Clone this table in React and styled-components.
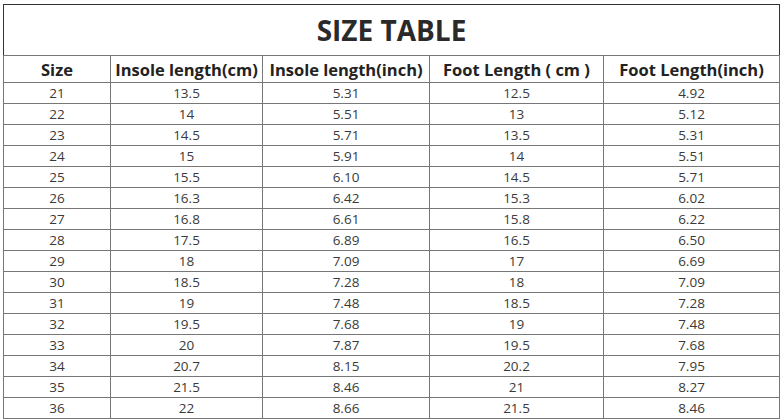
import React from "react";
import styled, { createGlobalStyle } from "styled-components";

const GlobalStyle = createGlobalStyle`
  html, body { margin: 0; padding: 0; background: #fff; }
`;

const Page = styled.div`
  padding: 4px 0 0 3px;
  font-family: "Open Sans", "Noto Sans", sans-serif;
`;

const Table = styled.table`
  border-collapse: collapse;
  table-layout: fixed;
  width: 776px;
  border: 1px solid #333;
`;

const Title = styled.th`
  height: 50px;
  padding: 0;
  font-size: 28px;
  font-weight: 700;
  color: #2a2a2a;
  text-align: center;
  border-bottom: 1px solid #777;
`;

const Head = styled.th`
  height: 26px;
  padding: 0;
  font-size: 16.5px;
  font-weight: 700;
  color: #222;
  text-align: center;
  border: 1px solid #777;
  white-space: nowrap;
`;

const Cell = styled.td`
  height: 20px;
  padding: 0;
  font-size: 13.5px;
  color: #3a3a3a;
  text-align: center;
  border: 1px solid #777;
  line-height: 20px;
`;

const widths = [107, 152, 167, 174, 176];
const heads = ["Size", "Insole length(cm)", "Insole length(inch)", "Foot Length ( cm )", "Foot Length(inch)"];

const rows = [
  ["21", "13.5", "5.31", "12.5", "4.92"],
  ["22", "14", "5.51", "13", "5.12"],
  ["23", "14.5", "5.71", "13.5", "5.31"],
  ["24", "15", "5.91", "14", "5.51"],
  ["25", "15.5", "6.10", "14.5", "5.71"],
  ["26", "16.3", "6.42", "15.3", "6.02"],
  ["27", "16.8", "6.61", "15.8", "6.22"],
  ["28", "17.5", "6.89", "16.5", "6.50"],
  ["29", "18", "7.09", "17", "6.69"],
  ["30", "18.5", "7.28", "18", "7.09"],
  ["31", "19", "7.48", "18.5", "7.28"],
  ["32", "19.5", "7.68", "19", "7.48"],
  ["33", "20", "7.87", "19.5", "7.68"],
  ["34", "20.7", "8.15", "20.2", "7.95"],
  ["35", "21.5", "8.46", "21", "8.27"],
  ["36", "22", "8.66", "21.5", "8.46"],
];

export default function App() {
  return (
    <Page>
      <GlobalStyle />
      <Table>
        <colgroup>
          {widths.map((w, i) => (
            <col key={i} style={{ width: w }} />
          ))}
        </colgroup>
        <thead>
          <tr>
            <Title colSpan={5}>SIZE TABLE</Title>
          </tr>
          <tr>
            {heads.map((h) => (
              <Head key={h}>{h}</Head>
            ))}
          </tr>
        </thead>
        <tbody>
          {rows.map((r) => (
            <tr key={r[0]}>
              {r.map((v, i) => (
                <Cell key={i}>{v}</Cell>
              ))}
            </tr>
          ))}
        </tbody>
      </Table>
    </Page>
  );
}
